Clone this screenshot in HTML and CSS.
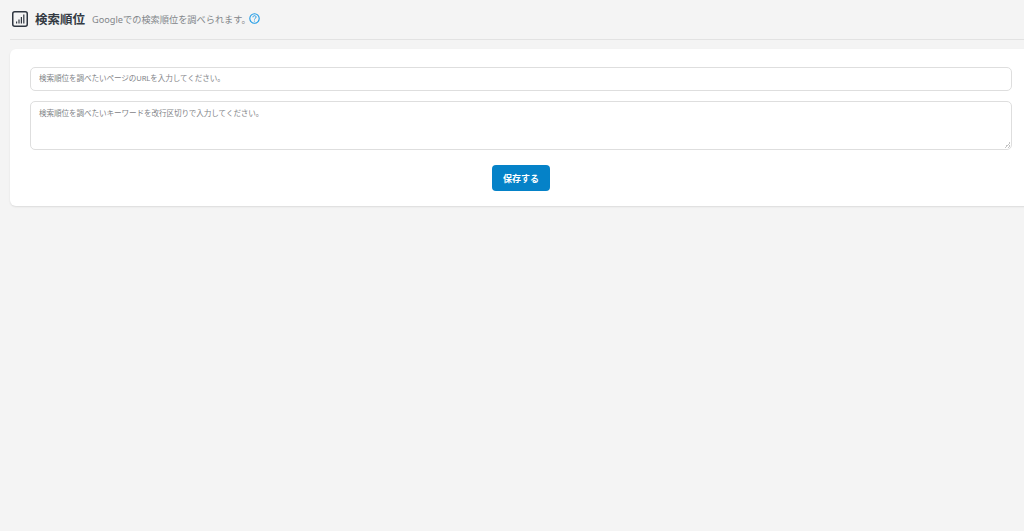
FILE: index.html
```html
<!DOCTYPE html>
<html lang="ja">
<head>
  <meta charset="UTF-8">
  <title>検索順位</title>
  <link rel="stylesheet" href="styles.css">
</head>
<body>
  <header class="page-head">
    <svg class="head-icon" width="16" height="16" viewBox="0 0 16 16" fill="none">
      <rect x="0.75" y="0.75" width="14.5" height="14.5" rx="2" stroke="#2f3640" stroke-width="1.5"/>
      <path d="M4 10.5h1.2v2H4zM6.4 8.5h1.2v4H6.4zM8.8 6h1.2v6.5H8.8zM11.2 3.5h1.2v9h-1.2z" fill="#2f3640"/>
    </svg>
    <h1 class="head-title">検索順位</h1>
    <p class="head-desc">Googleでの検索順位を調べられます。</p>
    <svg class="help-icon" width="11" height="11" viewBox="0 0 11 11" fill="none">
      <circle cx="5.5" cy="5.5" r="4.7" stroke="#1f9be6" stroke-width="1.1"/>
      <path d="M3.9 4.3c0-1 .7-1.6 1.6-1.6s1.6.6 1.6 1.4c0 1.2-1.6 1.2-1.6 2.4" stroke="#1f9be6" stroke-width="1"/>
      <circle cx="5.5" cy="8" r=".6" fill="#1f9be6"/>
    </svg>
  </header>

  <section class="card">
    <input class="field" type="text" placeholder="検索順位を調べたいページのURLを入力してください。">
    <textarea class="field field-area" placeholder="検索順位を調べたいキーワードを改行区切りで入力してください。"></textarea>
    <div class="actions">
      <button class="save-btn" type="button">保存する</button>
    </div>
  </section>
</body>
</html>
```

FILE: styles.css
```css
* {
  box-sizing: border-box;
}

html, body {
  height: 100%;
}

body {
  margin: 0;
  padding-left: 10px;
  overflow: hidden;
  background: #f4f4f4;
  color: #333;
  font-family: "Noto Sans", "Noto Sans CJK JP", sans-serif;
}

.page-head {
  display: flex;
  align-items: center;
  height: 40px;
  padding: 0 0 2px 2px;
  border-bottom: 1px solid #e2e2e2;
}

.head-icon {
  flex: none;
}

.head-title {
  margin: 0 0 0 7px;
  font-size: 12.5px;
  font-weight: 700;
  color: #333a42;
}

.head-desc {
  margin: 0 0 0 7px;
  font-size: 9.2px;
  color: #82868a;
}

.help-icon {
  margin-left: -2px;
}

.card {
  display: flex;
  flex-direction: column;
  width: 1030px;
  height: 157px;
  margin-top: 9px;
  padding: 18px 32px 0 20px;
  background: #fff;
  border-radius: 6px;
  box-shadow: 0 1px 2px rgba(0, 0, 0, 0.1);
}

.field {
  display: block;
  width: 982px;
  height: 24px;
  padding: 0 8px 2px;
  border: 1px solid #dedede;
  border-radius: 5px;
  background: #fff;
  font-family: inherit;
  font-size: 7.6px;
  letter-spacing: -0.1px;
  color: #333;
}

.field::placeholder {
  color: #7f8387;
  opacity: 1;
}

.field-area {
  height: 49px;
  margin-top: 10px;
  padding: 5px 8px;
  outline: none;
}

.field-area::-webkit-resizer {
  background: linear-gradient(135deg, transparent 50%, #c4c4c4 50%, #c4c4c4 60%, transparent 60%, transparent 75%, #c4c4c4 75%, #c4c4c4 85%, transparent 85%) right 1px bottom 1px / 6px 6px no-repeat;
}

.actions {
  display: flex;
  justify-content: center;
  width: 982px;
  margin-top: 15px;
}

.save-btn {
  width: 58px;
  height: 26px;
  padding: 0;
  border: 0;
  border-radius: 4px;
  background: #0582c8;
  color: #fff;
  font-family: inherit;
  font-size: 9px;
  font-weight: 700;
}
```
